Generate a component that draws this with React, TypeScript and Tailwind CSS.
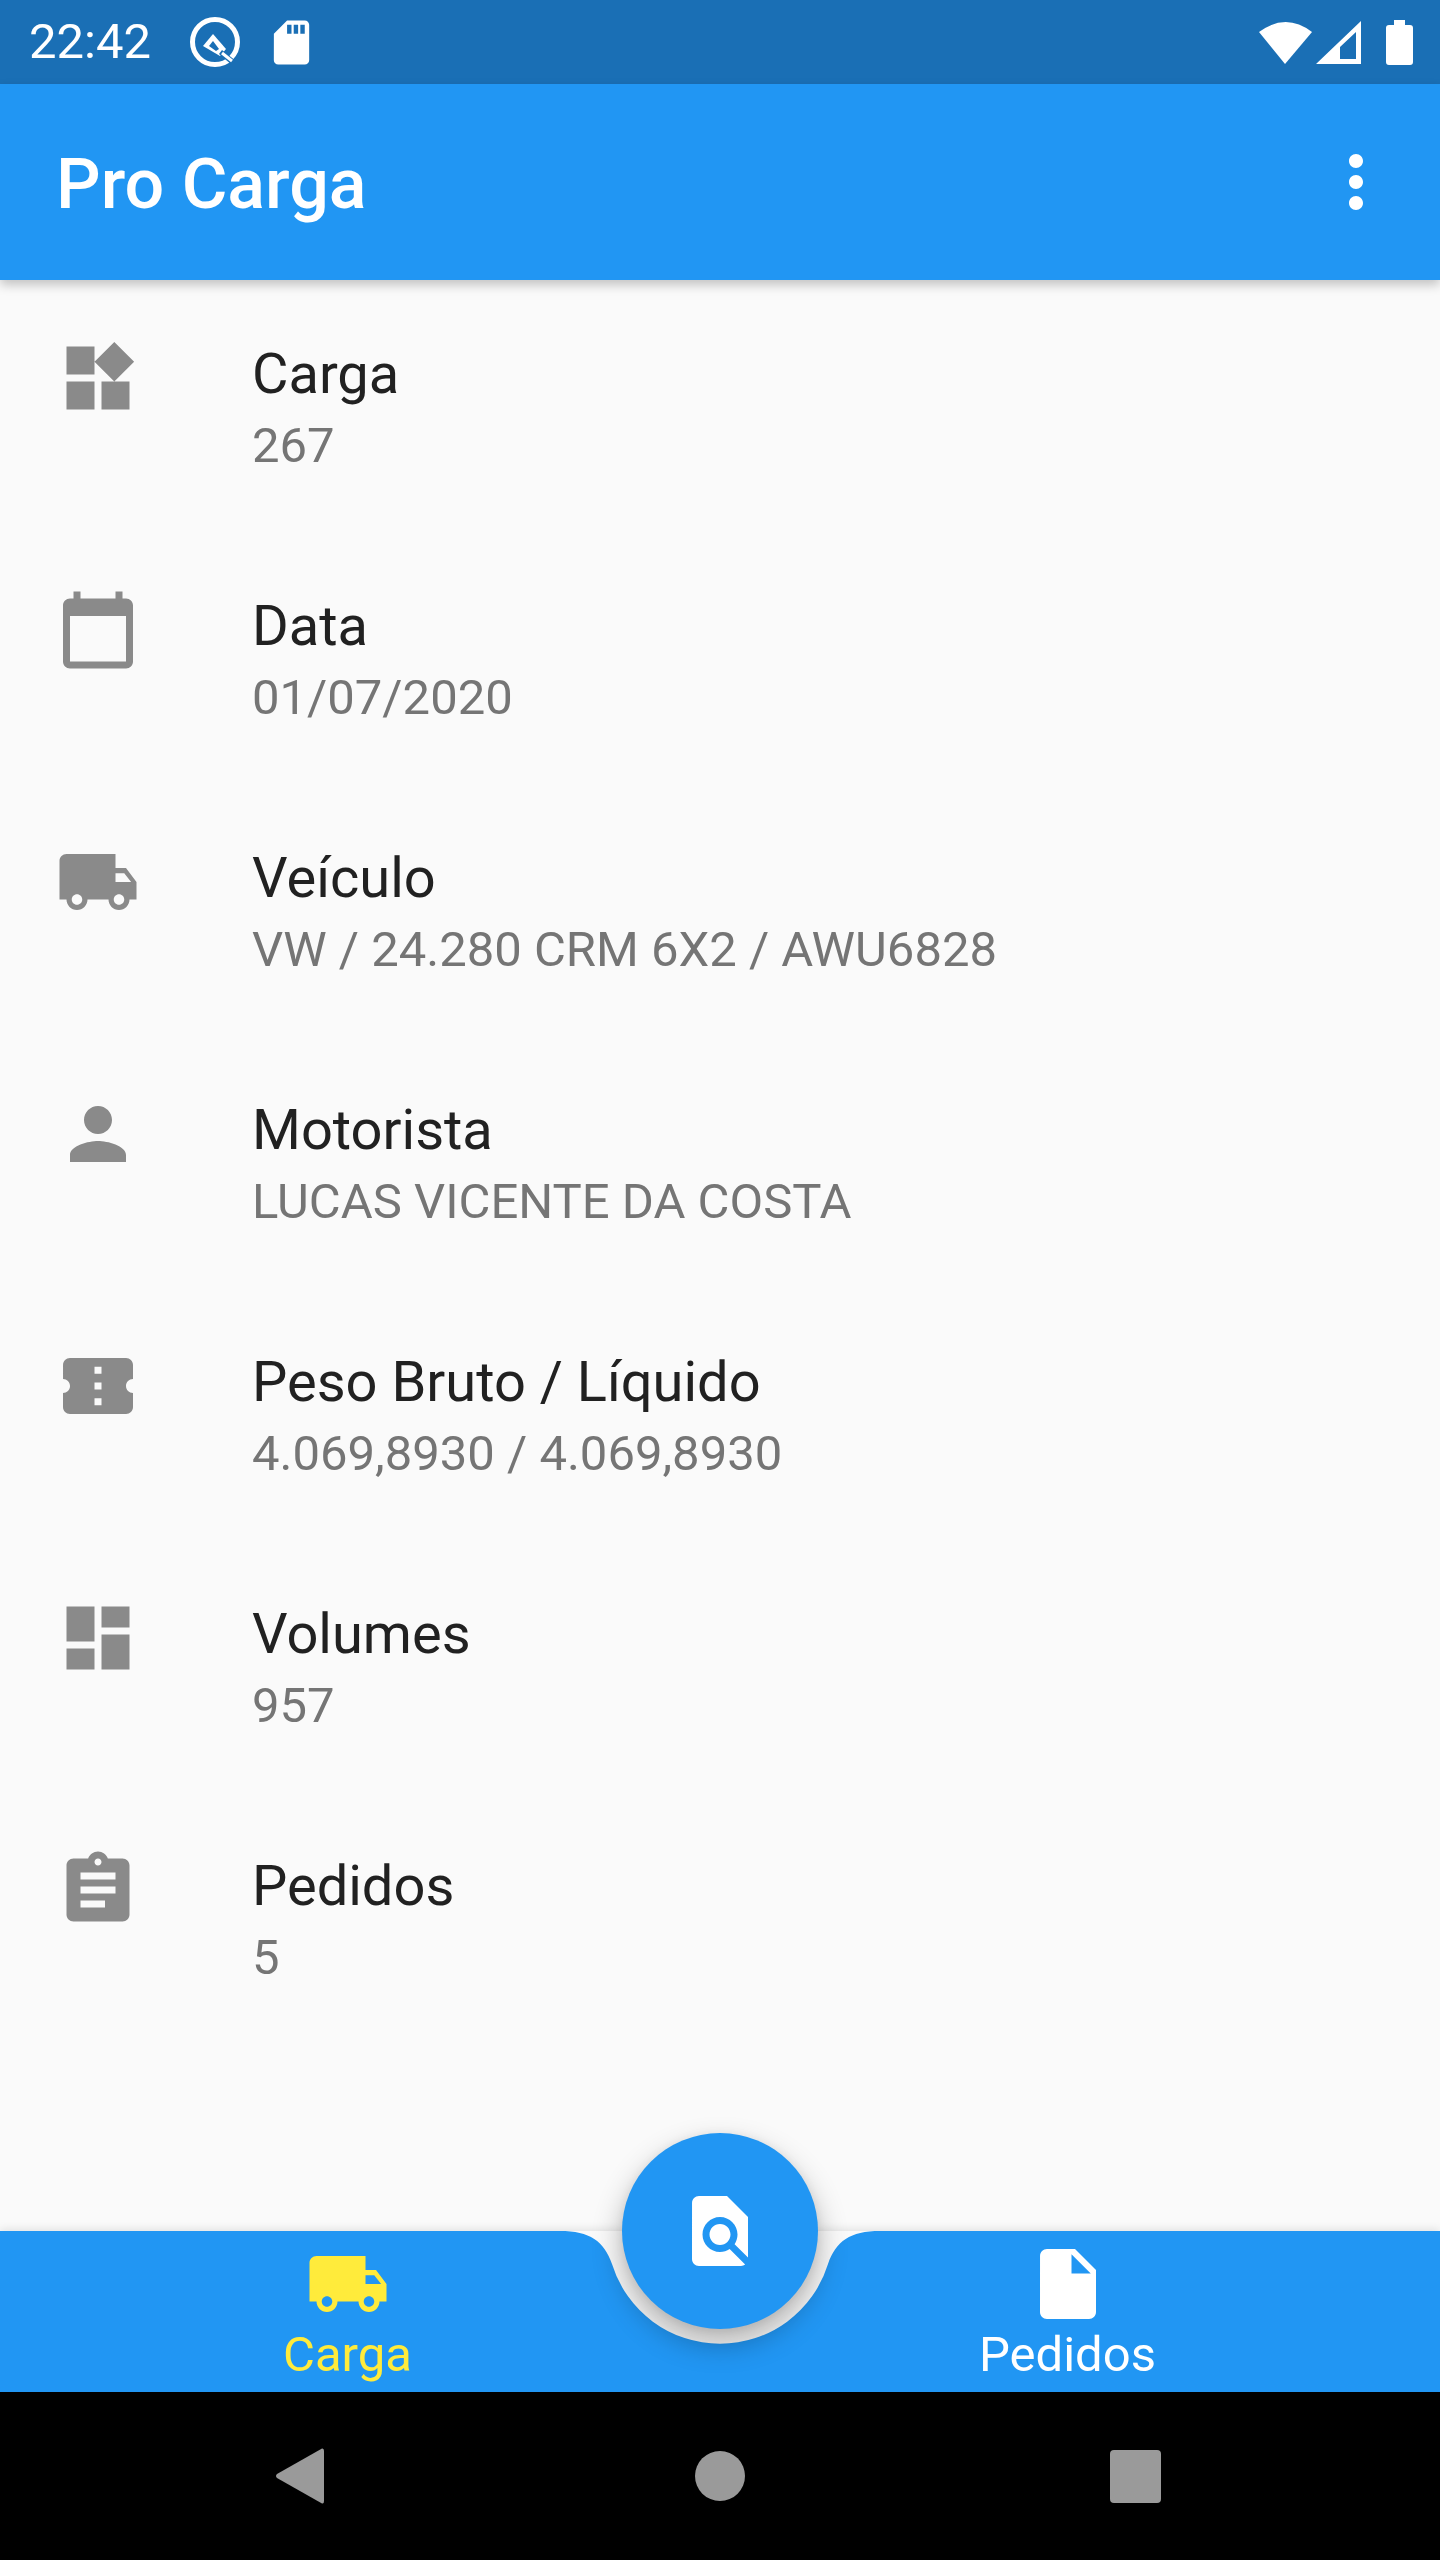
const PATHS = {
  widgets: 'M13 13v8h8v-8h-8zM3 21h8v-8H3v8zM3 3v8h8V3H3zm13.66-1.31L11 7.34 16.66 13l5.66-5.66-5.66-5.65z',
  calendar:
    'M20 3h-1V1h-2v2H7V1H5v2H4c-1.1 0-2 .9-2 2v16c0 1.1.9 2 2 2h16c1.1 0 2-.9 2-2V5c0-1.1-.9-2-2-2zm0 18H4V8h16v13z',
  truck:
    'M20 8h-3V4H3c-1.1 0-2 .9-2 2v11h2c0 1.66 1.34 3 3 3s3-1.34 3-3h6c0 1.66 1.34 3 3 3s3-1.34 3-3h2v-5l-3-4zM6 18.5c-.83 0-1.5-.67-1.5-1.5s.67-1.5 1.5-1.5 1.5.67 1.5 1.5-.67 1.5-1.5 1.5zm13.5-9l1.96 2.5H17V9.5h2.5zm-1.5 9c-.83 0-1.5-.67-1.5-1.5s.67-1.5 1.5-1.5 1.5.67 1.5 1.5-.67 1.5-1.5 1.5z',
  person: 'M12 12c2.21 0 4-1.79 4-4s-1.79-4-4-4-4 1.79-4 4 1.79 4 4 4zm0 2c-2.67 0-8 1.34-8 4v2h16v-2c0-2.66-5.33-4-8-4z',
  ticket:
    'M22 10V6c0-1.11-.9-2-2-2H4c-1.1 0-1.99.89-1.99 2v4c1.1 0 1.99.9 1.99 2s-.89 2-2 2v4c0 1.1.9 2 2 2h16c1.1 0 2-.9 2-2v-4c-1.1 0-2-.9-2-2s.9-2 2-2zm-9 7.5h-2v-2h2v2zm0-4.5h-2v-2h2v2zm0-4.5h-2v-2h2v2z',
  dashboard: 'M3 13h8V3H3v10zm0 8h8v-6H3v6zm10 0h8V11h-8v10zm0-18v6h8V3h-8z',
  assignment:
    'M19 3h-4.18C14.4 1.84 13.3 1 12 1c-1.3 0-2.4.84-2.82 2H5c-1.1 0-2 .9-2 2v14c0 1.1.9 2 2 2h14c1.1 0 2-.9 2-2V5c0-1.1-.9-2-2-2zm-7 0c.55 0 1 .45 1 1s-.45 1-1 1-1-.45-1-1 .45-1 1-1zm2 14H7v-2h7v2zm3-4H7v-2h10v2zm0-4H7V7h10v2z',
  file: 'M6 2c-1.1 0-1.99.9-1.99 2L4 20c0 1.1.89 2 1.99 2H18c1.1 0 2-.9 2-2V8l-6-6H6zm7 7V3.5L18.5 9H13z',
  findInPage:
    'M20 19.59V8l-6-6H6c-1.1 0-1.99.9-1.99 2L4 20c0 1.1.89 2 1.99 2H18c.45 0 .85-.15 1.19-.4l-4.43-4.43c-.8.52-1.74.83-2.76.83-2.76 0-5-2.24-5-5s2.24-5 5-5 5 2.24 5 5c0 1.02-.31 1.96-.83 2.75L20 19.59zM9 13c0 1.66 1.34 3 3 3s3-1.34 3-3-1.34-3-3-3-3 1.34-3 3z',
  moreVert:
    'M12 8c1.1 0 2-.9 2-2s-.9-2-2-2-2 .9-2 2 .9 2 2 2zm0 2c-1.1 0-2 .9-2 2s.9 2 2 2 2-.9 2-2-.9-2-2-2zm0 6c-1.1 0-2 .9-2 2s.9 2 2 2 2-.9 2-2-.9-2-2-2z',
  sdCard:
    'M18 2h-8L4.02 8 4 20c0 1.1.9 2 2 2h12c1.1 0 2-.9 2-2V4c0-1.1-.9-2-2-2zm-6 6h-2V4h2v4zm3 0h-2V4h2v4zm3 0h-2V4h2v4z',
};

const Icon = ({ d, className }: { d: string; className?: string }) => (
  <svg viewBox="0 0 24 24" fill="currentColor" className={className}>
    <path d={d} />
  </svg>
);

const rows = [
  { icon: PATHS.widgets, title: 'Carga', value: '267' },
  { icon: PATHS.calendar, title: 'Data', value: '01/07/2020' },
  { icon: PATHS.truck, title: 'Veículo', value: 'VW / 24.280 CRM 6X2 / AWU6828' },
  { icon: PATHS.person, title: 'Motorista', value: 'LUCAS VICENTE DA COSTA' },
  { icon: PATHS.ticket, title: 'Peso Bruto / Líquido', value: '4.069,8930 / 4.069,8930' },
  { icon: PATHS.dashboard, title: 'Volumes', value: '957' },
  { icon: PATHS.assignment, title: 'Pedidos', value: '5' },
];

const StatusBar = () => (
  <div className="flex h-[84px] shrink-0 items-center bg-[#1a6fb5] pl-[29px] pr-[26px] text-white">
    <span className="w-[160px] shrink-0 text-[49px] leading-[84px]">22:42</span>
    {/* Q beta badge */}
    <svg viewBox="0 0 52 52" className="h-[52px] w-[52px] shrink-0">
      <circle cx="26" cy="26" r="22.5" fill="none" stroke="#fff" strokeWidth="5" />
      <path d="M24 18 L37 33 L31 40 L14 30 Z" fill="#fff" />
      <path d="M24 25 L30 33 L27 35 L20 30 Z" fill="#1a6fb5" />
      <path d="M33 34 L47 45 L43 49 L30 38 Z" fill="#1a6fb5" />
      <path d="M33 37 L43 45" stroke="#fff" strokeWidth="3" />
    </svg>
    <Icon d={PATHS.sdCard} className="ml-[24px] h-[53px] w-[53px] shrink-0" />
    <svg viewBox="0 0 156 48" className="ml-auto h-[48px] w-[156px]" fill="#fff">
      <path d="M1 14 Q28 -6 54 14 L27 46 Z" />
      <path d="M58 46 L103 3 V46 Z M82 41 H98 V14 L82 29 Z" fillRule="evenodd" />
      <path d="M136 2 H147 V7 H152 Q155 7 155 10 V44 Q155 47 152 47 H131 Q128 47 128 44 V10 Q128 7 131 7 H136 Z" />
    </svg>
  </div>
);

const AppHeader = () => (
  <header className="relative z-10 flex h-[196px] shrink-0 items-center justify-between bg-[#2196f3] pl-[56px] pr-[42px] text-white shadow-[0_5px_10px_rgba(0,0,0,0.22)]">
    <h1 className="pt-[4px] text-[70px] font-medium leading-[84px]">Pro Carga</h1>
    <Icon d={PATHS.moreVert} className="h-[84px] w-[84px]" />
  </header>
);

const InfoRow = ({ icon, title, value }: { icon: string; title: string; value: string }) => (
  <div className="flex h-[252px] gap-[112px] pl-[56px] pt-[56px]">
    <Icon d={icon} className="h-[84px] w-[84px] shrink-0 text-[#8a8a8a]" />
    <div className="mt-[3px]">
      <div className="text-[56px] leading-[70px] text-[#212121]">{title}</div>
      <div className="mt-[2px] text-[49px] leading-[70px] text-[#757575]">{value}</div>
    </div>
  </div>
);

const BottomBar = () => (
  <div className="relative grid h-[161px] shrink-0 grid-cols-[695px_1fr] bg-[#2196f3] pt-[11px] shadow-[0_-2px_8px_rgba(0,0,0,0.1)]">
    <div className="flex flex-col items-center text-[#ffeb3b]">
      <Icon d={PATHS.truck} className="h-[84px] w-[84px]" />
      <span className="mt-[1px] text-[49px] leading-[56px]">Carga</span>
    </div>
    <div className="flex flex-col items-center text-white">
      <Icon d={PATHS.file} className="h-[84px] w-[84px]" />
      <span className="mt-[1px] text-[49px] leading-[56px]">Pedidos</span>
    </div>
    {/* notch cut around the FAB */}
    <svg viewBox="0 0 360 125" className="absolute left-[540px] top-0 h-[125px] w-[360px]">
      <path d="M0 0 H20 C50 0 64 10 72 33 A113 113 0 0 0 288 33 C296 10 310 0 340 0 H360 V-2 H0 Z" fill="#fafafa" />
    </svg>
    <button className="absolute left-[622px] top-[-98px] flex h-[196px] w-[196px] items-center justify-center rounded-full bg-[#2196f3] text-white shadow-[0_0_10px_rgba(0,0,0,0.05),0_14px_30px_rgba(0,0,0,0.3)]">
      <Icon d={PATHS.findInPage} className="h-[84px] w-[84px]" />
    </button>
  </div>
);

const NavBar = () => (
  <div className="flex h-[168px] shrink-0 items-center bg-black pl-[276px]">
    <svg viewBox="0 0 48 56" className="h-[56px] w-[48px]" fill="#9a9a9a">
      <path d="M46 0.5 Q48 0 48 3 V53 Q48 56 46 55.5 L1 30 Q-1 28 1 26 Z" />
    </svg>
    <div className="ml-[371px] h-[50px] w-[50px] rounded-full bg-[#9a9a9a]" />
    <div className="ml-[365px] h-[53px] w-[51px] rounded-[4px] bg-[#9a9a9a]" />
  </div>
);

export default function App() {
  return (
    <div className="flex h-[2560px] w-[1440px] flex-col overflow-hidden bg-[#fafafa] [font-family:Roboto,sans-serif]">
      <StatusBar />
      <AppHeader />
      <main className="flex-1">
        {rows.map((row) => (
          <InfoRow key={row.title} {...row} />
        ))}
      </main>
      <BottomBar />
      <NavBar />
    </div>
  );
}
